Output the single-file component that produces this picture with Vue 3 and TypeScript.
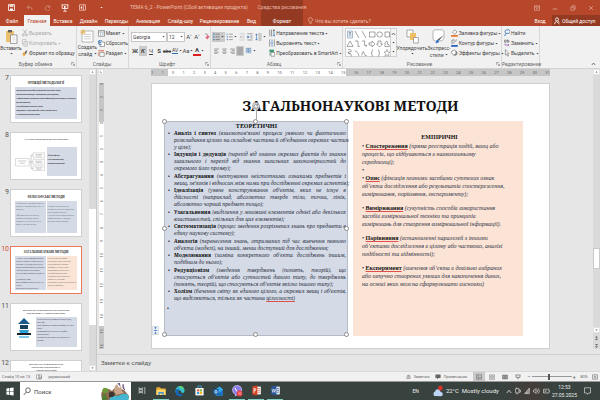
<script setup lang="ts">
import { h } from 'vue'

type Shape = [d: string, fill?: string, stroke?: string, width?: number]
type Icon = [w: number, h: number, shapes: Shape[]]

const G = '#6a6a6a'
const B = '#2f6fb5'
const icons: Record<string, Icon> = {
  save: [7, 7, [['M.5 .5H6.5V6.5H.5Z', 'none', '#fff', 0.8], ['M1.5 .5H5.5V3H1.5Z', '#f3d5cc'], ['M2 4.5H5V6.5H2Z', '#fff']]],
  undo: [7, 6, [['M3 .5L1 2.3L3 4M1 2.3H4.5Q6.3 2.5 6 5', 'none', '#d58a76', 0.9]]],
  redo: [7, 6, [['M5.5 2A2.4 2.4 0 1 0 5.9 4M5.8 .3V2.2H4', 'none', '#d58a76', 0.9]]],
  show: [8, 8, [['M.5 .8H7.5M1.2 1V4.5H6.8V1M4 4.5V7M2.3 7.3H5.7', 'none', '#fff', 0.8], ['M3 1.8L5.4 3L3 4.2Z', '#fff']]],
  touch: [8, 7, [['M.5 .8H6.5V6.2H.5ZM4.4 .8V6.2', 'none', '#f0c6ba', 0.8], ['M1.8 2.6H3.2V4.6H1.8Z', '#fff']]],
  caret: [3, 3, [['M.3 .9H2.7L1.5 2.3Z', 'currentColor']]],
  ribbonOpt: [6, 6, [['M.5 .8H5.5V5.3H.5ZM.5 2H5.5M3 4.6V2.8M2.2 3.6L3 2.8L3.8 3.6', 'none', '#e6b6a9', 0.6]]],
  min: [6, 6, [['M.8 4H5', 'none', '#e6b6a9', 0.7]]],
  restore: [6, 6, [['M.8 2.2H4V5.2H.8ZM2 2V.8H5.2V4H4.2', 'none', '#e6b6a9', 0.6]]],
  close: [6, 6, [['M1 1L5 5M5 1L1 5', 'none', '#e6b6a9', 0.6]]],
  bulb: [5, 8, [['M1.5 5.2V4.4A2 2 0 1 1 3.5 4.4V5.2ZM1.6 6.5H3.4', 'none', '#f0c6ba', 0.6]]],
  person: [6, 8, [['M3 4A1.5 1.6 0 1 0 3 .8A1.5 1.6 0 1 0 3 4M.5 7.2Q.8 4.6 2.4 4.5L5.5 7M3.8 4.3L5.4 5.4', 'none', '#fff', 0.8]]],
  paste: [13, 15, [['M1 2H9V13H1Z', '#ecc06f'], ['M3 1H7V3.4H3Z', '#606060'], ['M5.5 6H12V14.4H5.5Z', '#fff', '#777', 0.7], ['M7 8.5H10.5M7 10.3H10.5M7 12H10.5', 'none', '#bbb', 0.5]]],
  cut: [6, 8, [['M1 .6L4.5 5M5 .6L1.6 5', 'none', '#aaa', 0.7], ['M1.4 7A.9 1 0 1 0 1.4 5A.9 1 0 1 0 1.4 7M4.6 7A.9 1 0 1 0 4.6 5A.9 1 0 1 0 4.6 7', 'none', '#9aa7b5', 0.7]]],
  copy: [6, 8, [['M.5 .6H3.8V5H.5Z', '#f6f6f6', '#aaa', 0.6], ['M2 2.6H5.5V7.2H2ZM3 4.2H4.6M3 5.6H4.6', '#f6f6f6', '#aaa', 0.6]]],
  brush: [6, 8, [['M.3 4.4L2.6 3L3.6 5.4L1.8 7.4Z', '#e9a23f'], ['M2.8 3L5.4 .8L4.2 4.8L3.6 5.2Z', '#5c5c5c']]],
  newSlide: [14, 14, [['M2 2H13V13H2Z', '#fff', '#999', 0.7], ['M4 5.3H11M4 7.6H11M4 9.8H11', 'none', '#aaa', 0.6], ['M3 0V6M0 3H6M1 1L5 5M5 1L1 5', 'none', '#e8b04e', 0.8]]],
  layout: [7, 7, [['M.5 .5H6.5V6.3H.5Z', '#fff', G, 0.6], ['M.5 2H6.5M2 3.6H3M2 5H3', 'none', G, 0.6], ['M3.8 3H5.6V5.5H3.8Z', '#bcd0e6']]],
  reset: [7, 7, [['M2 2H6.5V6.5H2Z', '#fff', G, 0.6], ['M4 1A2.2 2.2 0 1 0 3.6 4.4M1 .4V2.6H3', 'none', B, 0.8]]],
  section: [7, 7, [['M.5 .8H6', 'none', '#d2633e', 1], ['M1.8 2.6H6.2V6.4H1.8Z', '#fff', G, 0.6], ['M.6 2V6', 'none', '#d2633e', 0.6]]],
  eraser: [6, 7, [['M.8 1H3.2L4 4', 'none', '#777', 0.6], ['M1.4 4.4L3.8 2L5.6 3.8L3.2 6.4Z', '#e06a80']]],
  bullets: [7, 8, [['M2.6 1.2H6.8M2.6 3.9H6.8M2.6 6.6H6.8', 'none', G, 0.7], ['M.3 .6H1.5V1.8H.3ZM.3 3.3H1.5V4.5H.3ZM.3 6H1.5V7.2H.3Z', B]]],
  numbers: [7, 8, [['M2.8 1.2H6.8M2.8 3.9H6.8M2.8 6.6H6.8', 'none', G, 0.6], ['M1 .3V2M.5 3.3H1.5V4.5M.5 6H1.5V7.4', 'none', B, 0.6]]],
  outdent: [6, 8, [['M.4 .8H5.6M3.2 3H5.6M3.2 4.8H5.6M.4 7H5.6', 'none', '#bbb', 0.6], ['M2.6 2.4V5.4L.5 3.9Z', '#bbb']]],
  indent: [6, 8, [['M.4 .8H5.6M3.2 3H5.6M3.2 4.8H5.6M.4 7H5.6', 'none', G, 0.6], ['M.4 2.4V5.4L2.6 3.9Z', B]]],
  spacing: [7, 8, [['M3.4 1H6.6M3.4 3H6.6M3.4 5H6.6M3.4 7H6.6', 'none', G, 0.6], ['M1.5 1V7M.5 2.2L1.5 .8L2.5 2.2M.5 5.8L1.5 7.2L2.5 5.8', 'none', B, 0.6]]],
  left: [5, 6, [['M.2 1H4.8M.2 2.6H3.4M.2 4.2H4.8M.2 5.7H3.4', 'none', G, 0.6]]],
  center: [5, 6, [['M.2 1H4.8M1 2.6H4M.2 4.2H4.8M1 5.7H4', 'none', G, 0.6]]],
  right: [5, 6, [['M.2 1H4.8M1.6 2.6H4.8M.2 4.2H4.8M1.6 5.7H4.8', 'none', G, 0.6]]],
  just: [6, 8, [['M.2 1H5.8M.2 3H5.8M.2 5H5.8M.2 7H5.8', 'none', G, 0.7]]],
  cols: [7, 7, [['M.5 .5H6.5V6.5H.5Z', '#c4d5e8'], ['M3.5 1V6M1 1.6H3M4 1.6H6M1 3.2H3M4 3.2H6M1 4.8H3M4 4.8H6', 'none', '#5c83ad', 0.6]]],
  dir: [6, 8, [['M.8 .6V7.4M2.6 .6V7.4', 'none', G, 0.7], ['M5 2V7M4 6L5 7.2L6 6', 'none', B, 0.7], ['M4 .6H5.6V2H4Z', G]]],
  valign: [6, 8, [['M1.2 .8H.4V7.2H1.2M4.8 .8H5.6V7.2H4.8', 'none', G, 0.6], ['M3 .6V2.6M3 5.4V7.4M1.4 4H4.6', 'none', B, 0.8]]],
  smart: [6, 8, [['M.4 .6H5V3.4H.4Z', '#3f9b74'], ['M2 3.6H5.8V7.2H2Z', '#fff', G, 0.6], ['M1 4V6.5', 'none', '#3f9b74', 0.8]]],
  arrange: [13, 15, [['M1 1H7V8H1Z', '#fff', '#888', 0.7], ['M4 4H10V11H4Z', '#f0c060'], ['M7.5 8.5H12.3V14H7.5Z', '#fff', '#888', 0.7]]],
  styles: [13, 15, [['M3 .8H10Q12 1 12 3V9Q11.5 12 8 12H3Q1 12 1 9V3Q1 1 3 .8Z', '#fff', '#999', 0.7], ['M11.8 6L7 11.5L5.6 10.6Z', '#555'], ['M7 11.4L5 10.6L3.4 14.2L6.4 13.8Z', '#2c74c9']]],
  fill: [7, 8, [['M1.5 3L4 .8L6 3L3.6 5.2Z', '#fff', G, 0.6], ['M.2 6H6.8V7.8H.2Z', '#e9762d']]],
  line: [7, 8, [['M1 1H4M1 1V5M1.8 4.6L6 .6', 'none', G, 0.7], ['M.2 6H6.8V7.8H.2Z', '#2b62c4']]],
  effects: [7, 8, [['M2 2.6L4.6 1.4L6.4 3V5.6L4 7L2 5.6Z', '#8f8f8f'], ['M.8 2L3.6 1L5 2.4V4.6L2.6 6L.8 4.6Z', '#fff', G, 0.6]]],
  find: [6, 8, [['M3.6 4.4A1.9 1.9 0 1 0 3.6 .8A1.9 1.9 0 1 0 3.6 4.4M2.2 4.2L.5 7', 'none', B, 0.9]]],
  replace: [6, 8, [['M.4 1.2H2.2V3.2H.4ZM3.4 .4V3.2H5V1.6H3.4', 'none', G, 0.7], ['M1 4.6V6H5M4 5L5 6L4 7.2', 'none', '#8a4fb0', 0.7]]],
  pick: [6, 8, [['M1.4 .6V6L2.6 5L3.6 7.2L4.4 6.8L3.5 4.6H5Z', '#fff', G, 0.6]]],
  launch: [4, 4, [['M.4 3V.5H3M1.6 1.6L3.4 3.4M3.5 1.8V3.5H1.8', 'none', G, 0.5]]],
  up: [5, 4, [['M.8 3L2.5 1L4.2 3', 'none', '#555', 0.8]]],
  shapes: [44, 29, [
    ['M1.5 2H6.5V9H1.5Z', '#dde8f4', '#7f95ad', 0.6], ['M3 3.6H5M4 3.6V7', 'none', G, 0.6],
    ['M9 2L13 9M16 2L20 9', 'none', G, 0.6], ['M23.5 3H29V8H23.5Z', '#fff', G, 0.6],
    ['M30.8 5.5A2.8 2.6 0 1 0 36.4 5.5A2.8 2.6 0 1 0 30.8 5.5', '#fff', G, 0.6], ['M39 3H43.5V8H39Z', '#fff', G, 0.6],
    ['M1 17.4L4 12L7 17.4Z', '#fff', G, 0.6], ['M8.8 12H12V17.4H14M16 12H18.6V16.6H20.6M19.6 15.6L20.8 16.8L19.6 17.8', 'none', G, 0.6],
    ['M23 13.8H26V12L29 15L26 18V16H23Z', '#fff', G, 0.6], ['M32 12H35V15H36.6L33.6 18L30.6 15H32Z', '#fff', G, 0.6], ['M39 17.6V14Q40 11 42 13L41 15Q43.6 15 43.4 17.6Z', '#fff', G, 0.6],
    ['M2 20.6Q6 20 5 23Q1 22 3 25Q6 24 5 27.4M1.6 23L4 25', 'none', G, 0.6], ['M8.6 22Q12 22 13 27M15.6 26.6Q17 20 18 24Q19 28 20.8 26.6', 'none', G, 0.6],
    ['M27 20.6Q25.8 20.6 26 22.6Q26 24 25 24Q26 24 26 25.6Q25.8 27.4 27 27.4M32 20.6Q33.2 20.6 33 22.6Q33 24 34 24Q33 24 33 25.6Q33.2 27.4 32 27.4', 'none', G, 0.6],
    ['M41 20.4L41.9 23H44L42.4 24.6L43 27.3L41 25.8L39 27.3L39.6 24.6L38 23H40.1Z', '#fff', G, 0.5],
  ]],
  spell: [6, 6, [['M.5 .8H3V5H.5ZM3 .8H5.5V5H3Z', '#fff', G, 0.5], ['M3.2 3.6L4 4.6L5.6 2', 'none', G, 0.7]]],
  notes: [5, 5, [['M.4 3H4.6M.4 4.4H4.6M1.4 2L2.5 .8L3.6 2Z', 'none', G, 0.6]]],
  comment: [6, 6, [['M.4 .6H5.6V4H3.4L2.8 5.4L2 4H.4Z', '#666']]],
  normal: [6, 6, [['M.5 .8H5.5V5.2H.5ZM2.2 .8V5.2M2.2 3.6H5.5', 'none', G, 0.6]]],
  sorter: [6, 6, [['M.6 .8H2.4V2.6H.6ZM3.6 .8H5.4V2.6H3.6ZM.6 3.6H2.4V5.4H.6ZM3.6 3.6H5.4V5.4H3.6Z', 'none', G, 0.5]]],
  reading: [6, 6, [['M.5 1H2.8V5H.5ZM3.2 1H5.5V5H3.2Z', '#999', G, 0.5]]],
  present: [6, 6, [['M.4 1H5.6M1 1.2V3.4H5V1.2M3 3.4V5.4', 'none', G, 0.7]]],
  fit: [6, 6, [['M.6 .8H5.4V5.2H.6ZM3 1.6V4.4M1.6 3H4.4', 'none', G, 0.6]]],
  win: [8, 9, [['M.4 1.4L3.4 1V4.2H.4ZM4 .9L7.6 .4V4.2H4ZM.4 4.8H3.4V8L.4 7.6ZM4 4.8H7.6V8.6L4 8.1Z', '#fff']]],
  search: [8, 9, [['M5 5.6A2.3 2.4 0 1 0 5 .8A2.3 2.4 0 1 0 5 5.6M3.3 5L.8 8', 'none', '#444', 0.8]]],
  castle: [31, 17, [
    ['M2 17Q0 9 3 8Q8 4 12 8Q15 3 19 5L24 7L29 13L28 17Z', '#8a6a4c'], ['M2 8Q3 4 6 5Q9 5 8 9Q4 12 2 8', '#6e9a3c'],
    ['M14 8L15 3L17 1L19 5L21 3L22 8L24 10L16 12Z', '#c9a58b'], ['M18 1L19 -1L20 3M23 1V5L25 7', '#6a5a80', '#6a5a80', 1],
    ['M9 17Q12 12 18 13Q25 9 28 12Q30 15 28 17Z', '#45b7d3'], ['M9 10Q12 7 15 11L13 14H9Z', '#3e3430'], ['M2 17Q2 11 5 11Q7 14 7 17Z', '#4f7f31'],
  ]],
  taskview: [8, 9, [['M1 1.4V2.6H4.6V1.4M1 7.6V6.4H4.6V7.6M1 3.6H4.6V5.4H1ZM6.8 1V8', 'none', '#e4e4e4', 0.7]]],
  folder: [10, 10, [['M.4 1.2H4L5 2.4H9.6V9H.4Z', '#e9aa33'], ['M.4 3.6H9.6V9H.4Z', '#ffd568'], ['M2.4 6H7.6V9H6.4V7.4H3.6V9H2.4Z', '#3f94d8']]],
  edge: [10, 12, [['M.4 6.5A4.6 5.3 0 0 1 9.6 6Q9.6 8 7.4 8Q5.8 8 6 6.6Q5.6 4.8 3.6 5.4Q1.6 6.4 2.4 9Q.5 8.6 .4 6.5', '#36c3cf'], ['M.4 6Q1 3.6 4.4 3.8Q2.6 5.6 3.6 8Q5.2 10.4 8.8 9Q7 11.8 4.4 11.4Q.6 10.6 .4 6', '#1667b8'], ['M4 1Q9 .4 9.6 5.6Q9 2.8 5 3', '#61d06b']]],
  store: [9, 11, [['M.4 3H8.6V10.4H.4Z', '#f7f7f7'], ['M2.8 3V1H6.2V3', 'none', '#4bb3e8', 0.8], ['M2 4.4H4.2V6.4H2Z', '#e8502e'], ['M4.8 4.4H7V6.4H4.8Z', '#76b82a'], ['M2 7H4.2V9H2Z', '#2a9fe0'], ['M4.8 7H7V9H4.8Z', '#f6b500']]],
  outlook: [10, 10, [['M3 3L6.6 .4L9.8 3V9.4H2.6Z', '#36a9e8'], ['M3 9.4L9.8 4V9.4Z', '#1a6fc0'], ['M.3 3H5.6V8.6H.3Z', '#0f5ca8'], ['M3 7.2A1.2 1.4 0 1 0 3 4.4A1.2 1.4 0 1 0 3 7.2', 'none', '#fff', 0.8]]],
  viber: [11, 12, [['M5 .6Q9.6 .6 9.6 5Q9.4 9.4 5.4 9.4L3.4 11V9Q.6 8.4 .6 5Q.6 .8 5 .6', '#8c7bea', '#d7d0fa', 0.7], ['M3.2 3Q3.6 6.4 6.6 7.4', 'none', '#fff', 1], ['M7.6 11.4A2.9 2.9 0 1 0 7.6 5.6A2.9 2.9 0 1 0 7.6 11.4', '#ea3e3e'], ['M6.6 7.4V9.8M7.6 7.4H9V9.6H7.8Z', 'none', '#ffb9b9', 0.5]]],
  ppt: [9, 11, [['M4.6 1.6H8.8V9.4H4.6Z', '#fff'], ['M5.6 3.6H8M5.6 5.4H8M5.6 7.2H8', 'none', '#d04a2a', 0.7], ['M.2 1.4L5.4 .4V10.6L.2 9.6Z', '#cf4526'], ['M2 8V3.4H3Q4.4 4 3.6 5.4L2 5.8', 'none', '#fff', 0.8]]],
  word: [9, 11, [['M4.6 1.6H8.8V9.4H4.6Z', '#e8effa'], ['M5.6 3.6H8M5.6 5.4H8M5.6 7.2H8', 'none', '#2b579a', 0.7], ['M.2 1.4L5.4 .4V10.6L.2 9.6Z', '#2b579a'], ['M1 4L1.8 7.4L2.8 4L3.8 7.4L4.6 4', 'none', '#fff', 0.6]]],
  weather: [11, 12, [['M1.4 11A2.2 2.6 0 0 1 2 6.4Q3 3.4 5.6 4.4Q7.4 4.8 7.6 7Q10 7 9.8 9.6Q9.6 11.2 8 11.2Z', '#bcd4f6'], ['M7.4 5.4A2.3 2.5 0 1 0 7.4 .4A2.3 2.5 0 1 0 7.4 5.4', '#d8322c']]],
  chev: [6, 5, [['M.8 4L3 1.2L5.2 4', 'none', '#e8e8e8', 0.8]]],
  trayUsb: [6, 8, [['M.6 1.6H4V6H.6ZM4 3H5.4V5H4M2 6V7.4M1.6 1.4V.4', 'none', '#d8d8d8', 0.7]]],
  net: [6, 8, [['M.6 6.6L5.4 1V6.6ZM2 5L4 6.4', '#8f8a88', '#d8d8d8', 0.6]]],
  sound: [7, 8, [['M.5 3H1.6L3 1.4V6.6L1.6 5H.5ZM4.2 2.6Q5 4 4.2 5.4M5.4 1.4Q7.4 4 5.4 6.6', 'none', '#e8e8e8', 0.6]]],
  battery: [7, 8, [['M.5 2.2H6V6H.5ZM6.6 3.4V4.8M1.4 3.2L3.6 5.2M3.6 3.2L1.4 5.2', 'none', '#e0e0e0', 0.6]]],
  bell: [7, 8, [['M.5 .8H6.5V6H4.4L3.5 7.4L2.8 6H.5Z', 'none', '#d8d8d8', 0.7]]],
  rotate: [8, 8, [['M4 7.4A3.4 3.4 0 1 0 4 .6A3.4 3.4 0 1 0 4 7.4', '#f2f2f2', '#8a8a8a', 0.7], ['M5.6 3A2 2 0 1 0 6 4.4M5.9 1.8V3.3H4.4', 'none', '#777', 0.8]]],
  autofit: [7, 9, [['M.4 .4H6.6V8.6H.4Z', '#f4f6fa', '#b8c2d2', 0.6], ['M3.5 1V3.4M2.4 2.2L3.5 1L4.6 2.2M3.5 5.6V8M2.4 6.8L3.5 8L4.6 6.8M1.6 4.5H5.4', 'none', '#3f78c8', 0.8]]],
  tri: [7, 6, [['M1.8 3.6L3.5 1.8L5.2 3.6Z', '#555']]],
  triDown: [7, 6, [['M1.8 2.2L3.5 4L5.2 2.2Z', '#555']]],
  dbl: [7, 6, [['M2 2.8L3.5 1L5 2.8ZM2 5L3.5 3.2L5 5Z', '#666']]],
  dblDown: [7, 6, [['M2 1L3.5 2.8L5 1ZM2 3.2L3.5 5L5 3.2Z', '#666']]],
  corner: [6, 6, [['M2 1.4V4.2H4.6', 'none', '#666', 0.8]]],
  house: [18, 22, [['M9 1L15 7H3Z', '#175b8c'], ['M5 8H13V12H5Z', '#17415f'], ['M4 13H14L13 16H5Z', '#2f9fd8'], ['M2 17H16', 'none', '#17222b', 2], ['M4 19H14V21H4Z', '#7cc8ee']]],
  scheme: [30, 19, [['M.5 6.5H14V14H.5ZM18 .8H29.5V5.6H18ZM18 7.4H29.5V12.2H18ZM18 14H29.5V18.6H18Z', '#fff', '#bbb', 0.5], ['M14 10H18M16 3.2V16.4M16 3.2H18M16 16.4H18', 'none', '#999', 0.5], ['M3 9H11.4M4.6 11.2H10M20 2.6H27.4M21 4H26.6M20 9.2H27.4M21 10.6H26.6M20 15.8H27.4M21 17.2H26.6', 'none', '#aaa', 0.6]]],
}

const Ico = (p: { n: string }) => {
  const [w, hh, shapes] = icons[p.n]
  return h('svg', { width: w, height: hh, viewBox: `0 0 ${w} ${hh}`, class: 'ico', 'aria-hidden': 'true' },
    shapes.map(([d, fill, stroke, sw]) => h('path', { d, fill: fill ?? 'none', stroke: stroke ?? 'none', 'stroke-width': sw ?? 0 })))
}
Ico.props = ['n']

const tabs = ['Файл', 'Главная', 'Вставка', 'Дизайн', 'Переходы', 'Анимация', 'Слайд-шоу', 'Рецензирование', 'Вид']

interface Item { term: string; lines: string[]; wavy?: string }
const theory: Item[] = [
  { term: 'Аналіз і синтез', lines: ['(взаємопов’язані процеси уявного чи фактичного', 'розкладання цілого на складові частини й об’єднання окремих частин', 'у ціле);'] },
  { term: 'Індукція і дедукція', lines: ['(перехід від знання окремих фактів до знання', 'загального і перехід від знання загальних закономірностей до', 'окремого його прояву);'] },
  { term: 'Абстрагування', lines: ['(нехтування неістотними ознаками предметів і', 'явищ, зв’язків і відносин між ними при дослідженні окремих аспектів);'] },
  { term: 'Ідеалізація', lines: ['(уявне конструювання об’єктів, яких не існує в', 'дійсності (наприклад, абсолютно тверде тіло, точка, лінія,', 'абсолютно чорний предмет тощо);'] },
  { term: 'Узагальнення', lines: ['(виділення у множині елементів однієї або декількох', 'властивостей, спільних для цих елементів);'] },
  { term: 'Систематизація', lines: ['(процес зведення розрізнених знань про предмети в', 'єдину наукову систему);'] },
  { term: 'Аналогія', lines: ['(перенесення знань, отриманих під час вивчення певного', 'об’єкта (моделі), на інший, менш доступний для дослідження;'] },
  { term: 'Моделювання', lines: ['(заміна конкретного об’єкта досліджень іншим,', 'подібним до нього);'] },
  { term: 'Редукціонізм', lines: ['(зведення тверджень (понять, теорій), що', 'стосуються об’єктів або сутностей даного типу, до тверджень', '(понять, теорій), що стосуються об’єктів якісно іншого типу);'] },
  { term: 'Холізм', lines: ['(бачення світу як єдиного цілого, а окремих явищ і об’єктів,', 'що виділяються, тільки як частина '], wavy: 'цілосності)' },
]
const empirical: Item[] = [
  { term: 'Спостереження', lines: ['(пряма реєстрація подій, явищ або', 'процесів, що відбуваються в навколишньому', 'середовищі);'] },
  { term: 'Опис', lines: ['(фіксація певними засобами суттєвих ознак', 'об’єкта дослідження або результатів спостереження,', 'вимірювання, порівняння, експерименту);'] },
  { term: 'Вимірювання', lines: ['(сукупність способів використання', 'засобів вимірювальної техніки та принципів', 'вимірювань для створення вимірювальної інформації).'] },
  { term: 'Порівняння', lines: ['(встановленні паралелей з іншими', 'об’єктами дослідження в цілому або частково, аналізі', 'подібності та відмінності);'] },
  { term: 'Експеримент', lines: ['(вивчення об’єкта в довільно вибраних', 'або штучно створених умовах для накопичення даних,', 'на основі яких можна сформулювати висновки)'] },
]
const hNums = Array.from({ length: 34 }, (_, i) => Math.abs(i - 2))
const vNums = Array.from({ length: 20 }, (_, i) => Math.abs(i - 3))
const handles = ['tl', 'tc', 'tr', 'ml', 'mr', 'bl', 'bc', 'br']
const apps = [['folder', true], ['edge', false], ['store', false], ['outlook', false], ['viber', true], ['ppt', true], ['word', true]] as const
</script>

<template>
  <div class="app">
    <header class="top">
      <div class="quick">
        <button aria-label="Сохранить"><Ico n="save" /></button>
        <button aria-label="Отменить"><Ico n="undo" /></button>
        <button aria-label="Повторить"><Ico n="redo" /></button>
        <button aria-label="Показ"><Ico n="show" /></button>
        <button aria-label="Режим"><Ico n="touch" /></button>
        <button aria-label="Ещё"><Ico n="caret" /></button>
      </div>
      <div class="doc">ТЕМА 6_2 - PowerPoint (Сбой активации продукта)</div>
      <div class="ctx">Средства рисования</div>
      <div class="wins">
        <button aria-label="Лента"><Ico n="ribbonOpt" /></button>
        <button aria-label="Свернуть"><Ico n="min" /></button>
        <button aria-label="Окно"><Ico n="restore" /></button>
        <button aria-label="Закрыть"><Ico n="close" /></button>
      </div>
    </header>
    <nav class="tabs">
      <button v-for="t in tabs" :key="t" :class="{ on: t === 'Главная' }">{{ t }}</button>
      <button class="fmt">Формат</button>
      <button class="tell"><Ico n="bulb" />Что вы хотите сделать?</button>
      <button>Вход</button>
      <button class="share"><Ico n="person" />Общий доступ</button>
    </nav>

    <section class="ribbon">
      <div class="group">
        <div class="tools">
          <button class="big"><Ico n="paste" /><span>Вставить</span><Ico n="caret" /></button>
          <div class="rows">
            <button class="off"><Ico n="cut" />Вырезать</button>
            <button class="off"><Ico n="copy" />Копировать <Ico n="caret" /></button>
            <button><Ico n="brush" />Формат по образцу</button>
          </div>
        </div>
        <div class="cap"><span>Буфер обмена</span><Ico n="launch" /></div>
      </div>
      <div class="group">
        <div class="tools">
          <button class="big"><Ico n="newSlide" /><span>Создать</span><span>слайд <Ico n="caret" /></span></button>
          <div class="rows">
            <button><Ico n="layout" />Макет <Ico n="caret" /></button>
            <button><Ico n="reset" />Сбросить</button>
            <button><Ico n="section" />Раздел <Ico n="caret" /></button>
          </div>
        </div>
        <div class="cap"><span>Слайды</span></div>
      </div>
      <div class="group">
        <div class="lines">
          <div class="line">
            <div class="combo face"><select aria-label="Шрифт"><option>Georgia</option></select><Ico n="caret" /></div>
            <div class="combo size"><select aria-label="Размер"><option>12</option></select><Ico n="caret" /></div>
            <button class="glyph">A˄</button><button class="glyph">A˅</button>
            <button class="last" aria-label="Очистить"><Ico n="eraser" /></button>
          </div>
          <div class="line marks">
            <button><b>Ж</b></button><button class="lit"><b><i>К</i></b></button><button><u>Ч</u></button><button><b>S</b></button>
            <button class="tiny"><s>abc</s></button><button class="tiny"><span class="under">AV</span></button><Ico n="caret" />
            <button>Аа</button><Ico n="caret" /><button class="ink"><b>А</b></button><Ico n="caret" />
          </div>
        </div>
        <div class="cap"><span>Шрифт</span><Ico n="launch" /></div>
      </div>
      <div class="group">
        <div class="tools">
          <div class="lines para">
            <div class="line">
              <button class="lit pair" aria-label="Маркеры"><Ico n="bullets" /><Ico n="caret" /></button>
              <button class="pair" aria-label="Нумерация"><Ico n="numbers" /><Ico n="caret" /></button>
              <button aria-label="Уменьшить"><Ico n="outdent" /></button><button aria-label="Увеличить"><Ico n="indent" /></button>
              <button class="pair" aria-label="Интервал"><Ico n="spacing" /><Ico n="caret" /></button>
            </div>
            <div class="line">
              <button aria-label="Слева"><Ico n="left" /></button><button aria-label="Центр"><Ico n="center" /></button>
              <button aria-label="Справа"><Ico n="right" /></button><button class="lit" aria-label="По ширине"><Ico n="just" /></button>
              <button class="pair" aria-label="Колонки"><Ico n="cols" /><Ico n="caret" /></button>
            </div>
          </div>
          <div class="rows">
            <button><Ico n="dir" />Направление текста <Ico n="caret" /></button>
            <button><Ico n="valign" />Выровнять текст <Ico n="caret" /></button>
            <button><Ico n="smart" />Преобразовать в SmartArt <Ico n="caret" /></button>
          </div>
        </div>
        <div class="cap"><span>Абзац</span><Ico n="launch" /></div>
      </div>
      <div class="group">
        <div class="tools">
          <div class="gallery">
            <Ico n="shapes" />
            <div class="pager"><Ico n="up" /><Ico n="caret" /><Ico n="caret" /></div>
          </div>
          <button class="big wide"><Ico n="arrange" /><span>Упорядочить</span><Ico n="caret" /></button>
          <button class="big mid"><Ico n="styles" /><span>Экспресс-</span><span>стили <Ico n="caret" /></span></button>
          <div class="rows">
            <button><Ico n="fill" />Заливка фигуры <Ico n="caret" /></button>
            <button><Ico n="line" />Контур фигуры <Ico n="caret" /></button>
            <button><Ico n="effects" />Эффекты фигуры <Ico n="caret" /></button>
          </div>
        </div>
        <div class="cap"><span>Рисование</span><Ico n="launch" /></div>
      </div>
      <div class="group">
        <div class="tools">
          <div class="rows edit">
            <button><Ico n="find" />Найти</button>
            <button><Ico n="replace" />Заменить <Ico n="caret" /></button>
            <button><Ico n="pick" />Выделить <Ico n="caret" /></button>
          </div>
        </div>
        <div class="cap"><span>Редактирование</span></div>
      </div>
      <div class="fold"><Ico n="up" /></div>
    </section>

    <main class="work">
      <aside class="thumbs">
        <div class="strip">
          <div class="entry"><span>7</span>
            <div class="mini">
              <h3>ФУНКЦІЇ МЕТОДОЛОГІЇ</h3>
              <p class="blue heavy">•Визначення способів отримання наукових знань;<br>•Визначення порядку проведення дослідження;<br>•Забезпечення отримання нової інформації про явища та процеси, що вивчаються;<br>•Поглиблення наукової теорії;<br>•Введення у науковий обіг нової термінології;<br>•Створення системи знань</p>
            </div>
          </div>
          <div class="entry"><span>8</span>
            <div class="mini">
              <h3 class="long">ЗАГАЛЬНІ ГРУПИ МЕТОДІВ ДОСЛІДЖЕННЯ</h3>
              <div class="duo plan"><Ico n="scheme" /><p class="blue heavy mid">•Філософські;<br>•Загальнонаукові;<br>•Конкретнонаукові</p></div>
            </div>
          </div>
          <div class="entry"><span>9</span>
            <div class="mini">
              <h3>ФІЛОСОФСЬКІ МЕТОДИ</h3>
              <div class="duo"><p class="blue">• Діалектика. Розглядає явища та процеси у взаємозв’язку, русі та розвитку.<br><br>• Феноменологічний метод дозволяє описувати досвід свідомості, сутність речей та явищ у чистому вигляді</p><p class="blue"><br>• Герменевтичний метод тлумачення текстів та смислів у культурному контексті.<br>• Синергетика. Вивчає процеси самоорганізації у складних системах різної природи</p></div>
            </div>
          </div>
          <div class="entry now"><span>10</span>
            <div class="mini">
              <h3>ЗАГАЛЬНОНАУКОВІ МЕТОДИ</h3>
              <div class="duo"><p class="blue dark"><template v-for="t in theory.slice(0, 5)" :key="t.term">{{ t.term }} {{ t.lines[0] }}<br></template></p><p class="peach"><template v-for="t in empirical.slice(0, 5)" :key="t.term">{{ t.term }} {{ t.lines[0] }}<br></template></p></div>
            </div>
          </div>
          <div class="entry"><span>11</span>
            <div class="mini">
              <h3 class="long">МЕТОДИ ДОСЛІДЖЕННЯ В НАУЦІ «ПУБЛІЧНЕ<br>УПРАВЛІННЯ ТА АДМІНІСТРУВАННЯ»</h3>
              <div class="duo side"><Ico n="house" /><p class="blue dark"><template v-for="t in empirical.slice(0, 4)" :key="t.term">{{ t.term }} {{ t.lines[0] }}<br></template></p></div>
            </div>
          </div>
          <div class="entry"><span>12</span>
            <div class="mini last12"><h3 class="long">МЕТОДИ ДОСЛІДЖЕННЯ В НАУЦІ<br>«ПУБЛІЧНЕ УПРАВЛІННЯ ТА<br>АДМІНІСТРУВАННЯ»</h3></div>
          </div>
        </div>
        <div class="bar"><Ico n="tri" class="btn" /><i class="gap1"></i><i class="knob"></i><i class="gap2"></i><Ico n="triDown" class="btn" /></div>
      </aside>

      <div class="editor">
        <div class="stage">
          <Ico n="corner" class="btn cornerbox" />
          <div class="hruler"><span v-for="(n, i) in hNums" :key="i">{{ n }}</span></div>
          <div class="vruler"><span v-for="(n, i) in vNums" :key="i">{{ n }}</span></div>
          <article class="slide">
            <h1>ЗАГАЛЬНОНАУКОВІ МЕТОДИ</h1>
            <div class="boxes">
              <section class="box theory">
                <h2>ТЕОРЕТИЧНІ</h2>
                <ul>
                  <li v-for="t in theory" :key="t.term">
                    <div v-for="(l, i) in t.lines" :key="i" :class="{ full: i < t.lines.length - 1 }"><template v-if="i === 0"><b>{{ t.term }}</b>{{ ' ' }}</template>{{ l }}<u v-if="t.wavy && i === 1" class="bad">{{ t.wavy }}</u></div>
                  </li>
                </ul>
                <p class="dot">•</p>
                <span v-for="k in handles" :key="k" class="handle" :class="k"></span>
                <span class="stem"></span>
                <Ico n="rotate" class="spin" />
                <Ico n="autofit" class="fitbtn" />
              </section>
              <section class="box empirical">
                <h2>ЕМПІРИЧНІ</h2>
                <template v-for="(t, k) in empirical" :key="t.term">
                  <p><span v-for="(l, i) in t.lines" :key="i"><template v-if="i === 0">• <b class="bad">{{ t.term }}</b>{{ ' ' }}</template>{{ l }}</span></p>
                  <p v-if="k === 0" class="blank">•</p>
                </template>
              </section>
            </div>
          </article>
          <div class="bar main"><Ico n="tri" class="btn" /><i class="gap1"></i><i class="knob"></i><i class="gap2"></i><Ico n="triDown" class="btn" /><Ico n="dbl" class="jump" /><Ico n="dblDown" class="jump" /></div>
        </div>
        <div class="notes">Заметки к слайду</div>
      </div>
    </main>

    <footer class="status">
      <span>Слайд 10 из 13</span><Ico n="spell" /><span>украинский</span>
      <div class="views">
        <button class="txt"><Ico n="notes" />Заметки</button>
        <button class="txt"><Ico n="comment" />Примечания</button>
        <button class="lit" aria-label="Обычный"><Ico n="normal" /></button>
        <button aria-label="Сортировщик"><Ico n="sorter" /></button>
        <button aria-label="Чтение"><Ico n="reading" /></button>
        <button aria-label="Показ слайдов"><Ico n="present" /></button>
        <span class="zoom">−<input type="range" aria-label="Масштаб" min="0" max="100" value="42">+</span>
        <span class="pct">80%</span>
        <Ico n="fit" />
      </div>
    </footer>

    <footer class="task">
      <button class="start" aria-label="Пуск"><Ico n="win" /></button>
      <label class="find"><Ico n="search" /><input type="text" aria-label="Поиск" placeholder="Поиск"><Ico n="castle" /></label>
      <button class="slot" aria-label="Задачи"><Ico n="taskview" /></button>
      <button v-for="[a, run] in apps" :key="a" class="slot" :class="{ run }" :aria-label="a"><Ico :n="a" /></button>
      <div class="tray">
        <span class="lang">EN</span>
        <Ico n="weather" /><span class="temp">22°C&nbsp; Mostly cloudy</span>
        <div class="sys"><Ico n="chev" /><Ico n="trayUsb" /><Ico n="net" /><Ico n="sound" /><Ico n="battery" /></div>
        <div class="clock"><span>12:53</span><span>27.05.2025</span></div>
        <Ico n="bell" />
      </div>
    </footer>
  </div>
</template>

<style>
body { margin: 0; overflow: hidden; }
</style>

<style scoped>
* { box-sizing: border-box; }
.app { display: flex; flex-direction: column; height: 100vh; font-family: "Liberation Sans Narrow", Roboto, "Noto Sans", sans-serif; font-size: 5px; line-height: 6px; color: #444; background: #e6e6e6; overflow: hidden; white-space: nowrap; }
button { display: flex; align-items: center; justify-content: center; padding: 0; margin: 0; border: 0; background: none; color: inherit; font: inherit; white-space: nowrap; }
.ico { display: block; flex: none; }

.top { display: flex; height: 15px; background: #b7472a; color: #eec0b3; }
.quick { display: flex; align-items: center; padding-left: 2px; width: 130px; color: #fff; }
.quick button { width: 18px; }
.doc { width: 131px; line-height: 15px; }
.ctx { width: 42px; background: #943a22; line-height: 15px; color: #e8b3a4; display: flex; justify-content: center; }
.wins { margin-left: auto; display: flex; }
.wins button { width: 18px; }

.tabs { display: grid; grid-template-columns: 24px 26px 26px 25px 31px 32px 33px 45px 19px 42px 1fr 24px 48px; height: 11px; background: #b7472a; color: #fff; }
.tabs .on { background: #f1f1f1; color: #b7472a; }
.tabs .fmt { background: #943a22; }
.tabs .tell { justify-content: flex-start; gap: 2px; padding-left: 5px; color: #eec0b3; }
.tabs .share { background: #943a22; justify-content: flex-start; gap: 2px; padding-left: 2px; }

.ribbon { display: grid; grid-template-columns: 77px 52px 82px 132px 159px 38px 1fr; height: 43px; background: #f1f1f1; border-bottom: 1px solid #d2d2d2; }
.group { position: relative; display: flex; flex-direction: column; padding-top: 2px; border-right: 1px solid #d8d8d8; min-width: 0; }
.tools { display: flex; height: 31px; }
.big { flex-direction: column; width: 22px; justify-content: flex-start; padding-top: 1px; line-height: 7px; }
.big.mid { width: 24px; }
.big.wide { width: 30px; }
.big .ico:first-child { margin-bottom: 1px; }
.big span .ico { display: inline-block; }
.rows { display: flex; flex-direction: column; }
.rows button { height: 10px; justify-content: flex-start; gap: 1px; }
.rows.edit { padding-left: 2px; }
.off { color: #aaa; }
.cap { display: flex; align-items: center; height: 9px; color: #666; padding-right: 1px; }
.cap span { flex: 1; text-align: center; }
.lines { display: flex; flex-direction: column; justify-content: center; gap: 4px; height: 31px; padding-left: 2px; }
.line { display: flex; align-items: center; height: 10px; }
.combo { display: flex; align-items: center; height: 10px; border: 1px solid #c6c6c6; background: #fff; padding-right: 1px; }
.combo select { flex: 1; min-width: 0; appearance: none; border: 0; padding: 0 1px; background: none; font: inherit; line-height: 8px; color: #444; }
.face { width: 36px; }
.size { width: 18px; }
.glyph { width: 8px; font-size: 6px; }
.last { margin-left: 3px; }
.marks { font-size: 6px; }
.marks button { width: 8px; height: 10px; }
.marks .tiny { font-size: 5px; }
.under { border-bottom: 1px solid #2f6fb5; }
.ink { border-bottom: 2px solid #e02020; }
.lit { background: #cacaca; }
.para { width: 60px; padding-left: 1px; }
.para button { width: 8px; height: 10px; }
.para .pair { width: 13px; gap: 1px; }
.gallery { display: flex; margin: 0 0 2px 2px; border: 1px solid #d0d0d0; background: #fff; width: 52px; }
.pager { display: flex; flex-direction: column; align-items: center; justify-content: space-around; width: 6px; border-left: 1px solid #d0d0d0; background: #f4f4f4; }
.fold { display: flex; align-items: flex-end; justify-content: flex-end; padding: 0 4px 2px 0; }

.work { display: flex; flex: 1; min-height: 0; }
.thumbs { display: flex; width: 97px; border-right: 1px solid #c9c9c9; overflow: hidden; }
.strip { flex: 1; padding-top: 6px; display: flex; flex-direction: column; gap: 9px; overflow: hidden; }
.entry { display: grid; grid-template-columns: 9px 72px; gap: 1px; flex: none; height: 48px; }
.entry > span { font-size: 7px; text-align: right; line-height: 7px; color: #555; }
.mini { border: 1px solid #d0d0d0; background: #fff; padding: 5px 4px 3px; display: flex; flex-direction: column; height: 48px; overflow: hidden; white-space: normal; font-family: "Liberation Serif", serif; color: #222; }
.mini.last12 { padding-top: 2px; }
.now > span { color: #d2532f; }
.now .mini { border: 1px solid #ea7a5a; outline: 1px solid #ea7a5a; outline-offset: -1px; padding-top: 3px; }
.mini h3 { margin: 0; font-size: 3px; line-height: 4px; text-align: center; padding-bottom: 2px; }
.mini .long { font-size: 2px; line-height: 3px; }
.mini p { margin: 0; padding: 1px; font-size: 2px; line-height: 3px; overflow: hidden; color: #455; }
.mini .dark { color: #223; }
.blue { background: #d5dbe6; }
.peach { background: #fbe4d6; }
.mini .heavy { line-height: 4px; font-weight: bold; color: #111; flex: 1; }
.duo { display: grid; grid-template-columns: 1fr 1fr; gap: 1px; flex: 1; min-height: 0; }
.plan { align-items: center; padding-top: 3px; }
.plan .mid { height: 29px; padding-top: 6px; }
.side { grid-template-columns: 20px 1fr; align-items: stretch; }

.bar { display: flex; flex-direction: column; width: 7px; background: #dadada; }
.bar .gap1 { flex: 133; }
.bar .knob { flex: 114; background: #fff; }
.bar .gap2 { flex: 40; }
.btn { background: #fff; border: 1px solid #e2e2e2; }
.main .gap1 { flex: 172; }
.main .knob { flex: 18; border: 1px solid #c9c9c9; }
.main .gap2 { flex: 58; }
.jump { margin-top: 2px; }

.editor { flex: 1; display: flex; flex-direction: column; min-width: 0; }
.stage { position: relative; flex: 1; min-height: 0; display: grid; grid-template-columns: 7px 47px 1fr 43px 7px; grid-template-rows: 7px 1fr; row-gap: 7px; padding-bottom: 5px; }
.cornerbox { grid-column: 1; grid-row: 1; margin-left: 1px; }
.hruler { grid-column: 3; grid-row: 1; display: flex; justify-content: space-between; overflow: hidden; font-size: 4px; line-height: 7px; color: #666; background: linear-gradient(to right, #c6c6c6 17px, #fff 17px, #fff 195px, #c6c6c6 195px); }
.vruler { grid-column: 1; grid-row: 2; width: 5px; margin-left: 2px; display: flex; flex-direction: column; justify-content: space-between; align-items: center; overflow: hidden; font-size: 4px; line-height: 4px; color: #666; background: linear-gradient(#c6c6c6 39px, #fff 39px, #fff 243px, #c6c6c6 243px); }
.vruler span { writing-mode: vertical-rl; transform: rotate(180deg); }
.bar.main { grid-column: 5; grid-row: 1 / 3; }
.slide { grid-column: 3; grid-row: 2; background: #fff; border: 1px solid #d0d0d0; display: flex; flex-direction: column; padding: 11px 26px 12px 12px; font-family: "Noto Serif", "Liberation Serif", serif; color: #111; }
h1 { margin: 0; padding-left: 14px; font-size: 14px; line-height: 22px; height: 26px; text-align: center; }
.boxes { flex: 1; min-height: 0; display: grid; grid-template-columns: 184fr 170fr; gap: 5px; }
.box { position: relative; min-width: 0; font-size: 5px; font-style: italic; color: #2a2f42; }
.box b { font-style: normal; color: #111; }
.box h2 { margin: 0; font-size: 6px; line-height: 8px; text-align: center; font-style: normal; color: #111; }
.theory { background: #d5dbe6; border: 1px solid #b5bac4; padding: 0 1px 0 2px; line-height: 7px; }
.theory ul { list-style: none; margin: 0; padding: 0 0 0 7px; height: 172px; display: flex; flex-direction: column; justify-content: space-between; }
.theory li { position: relative; }
.theory li::before { content: "•"; position: absolute; left: -6px; font-style: normal; }
.full { text-align: justify; text-align-last: justify; }
.dot { margin: 3px 0; font-style: normal; }
.empirical { background: #fbe4d6; padding: 12px 6px 0 9px; line-height: 8px; font-family: "Liberation Serif", serif; font-size: 6px; }
.empirical h2 { line-height: 9px; }
.empirical p { margin: 0 0 6px; }
.empirical p span { display: block; }
.empirical p:nth-of-type(1), .empirical .blank { margin: 0; }
.bad { text-decoration: underline #e0504a 1px; }
.handle { position: absolute; width: 5px; height: 5px; border: 1px solid #8a8a8a; border-radius: 50%; background: #fff; margin: -3px; }
.tl { left: 0; top: 0; } .tc { left: 50%; top: 0; } .tr { left: 100%; top: 0; }
.ml { left: 0; top: 50%; } .mr { left: 100%; top: 50%; }
.bl { left: 0; top: 100%; } .bc { left: 50%; top: 100%; } .br { left: 100%; top: 100%; }
.stem { position: absolute; left: 50%; top: -12px; height: 10px; border-left: 1px solid #aaa; }
.spin { position: absolute; left: 50%; top: -20px; margin-left: -4px; }
.fitbtn { position: absolute; left: -13px; bottom: 0; }
.notes { height: 17px; border-top: 1px solid #cfcfcf; padding-left: 4px; font-size: 6px; line-height: 16px; color: #555; }

.status { display: flex; align-items: center; gap: 6px; height: 11px; padding: 0 2px; background: #f1f1f1; border-top: 1px solid #d8d8d8; border-bottom: 1px solid #999; font-size: 4px; color: #666; }
.views { margin-left: auto; display: flex; align-items: center; height: 9px; }
.views button { width: 12px; height: 9px; margin-right: 1px; }
.views .txt { width: auto; gap: 2px; margin-right: 6px; }
.zoom { display: flex; align-items: center; gap: 1px; font-size: 6px; margin-left: 2px; }
.zoom input { appearance: none; width: 40px; height: 1px; margin: 0; background: #999; }
.zoom input::-webkit-slider-thumb { appearance: none; width: 2px; height: 6px; background: #555; }
.pct { width: 16px; text-align: center; }

.task { display: flex; height: 18px; background: linear-gradient(to right, #38423e 84%, #453c3a 89%, #38423e 92%); color: #eee; }
.start { width: 20px; }
.find { display: flex; align-items: center; width: 111px; background: #fff; padding-left: 3px; gap: 3px; }
.find input { flex: 1; min-width: 0; border: 0; padding: 0; background: none; font: inherit; font-size: 6px; height: 14px; }
.find input::placeholder { color: #444; opacity: 1; }
.slot { width: 16px; margin-left: 3px; border-bottom: 1px solid transparent; }
.slot.run { border-bottom-color: #7fd0c4; }
.tray { margin-left: auto; display: flex; align-items: center; gap: 2px; padding-right: 9px; }
.lang { margin-right: 12px; }
.temp { font-size: 6px; }
.sys { display: flex; align-items: center; gap: 3px; margin-left: 5px; }
.clock { display: flex; flex-direction: column; align-items: center; line-height: 8px; margin-right: 5px; }
</style>
